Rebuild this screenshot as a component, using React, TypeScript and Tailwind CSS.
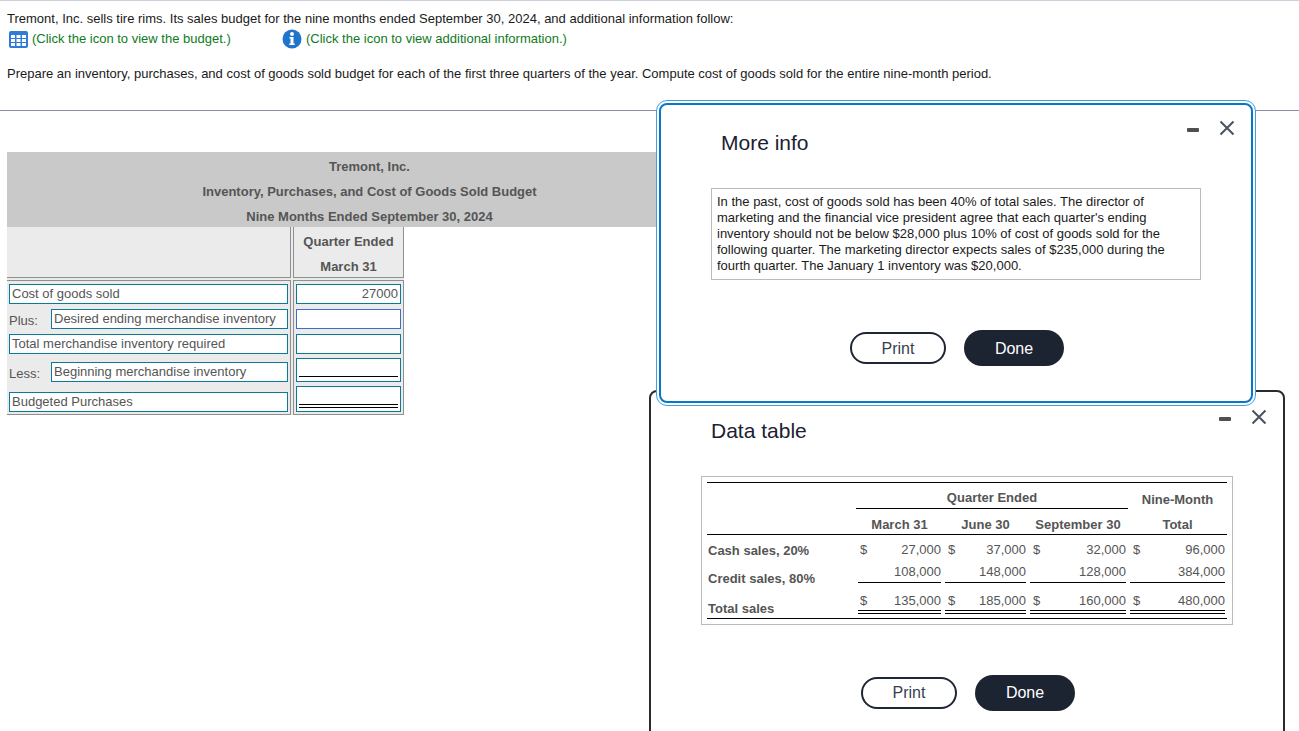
const cols = ["w-[83px]", "w-[81px]", "w-[96px]", "w-[95px]"];

const rows = {
  cash: [
    ["$", "27,000"],
    ["$", "37,000"],
    ["$", "32,000"],
    ["$", "96,000"],
  ],
  credit: ["108,000", "148,000", "128,000", "384,000"],
  total: [
    ["$", "135,000"],
    ["$", "185,000"],
    ["$", "160,000"],
    ["$", "480,000"],
  ],
};

const GridIcon = () => (
  <svg width="19" height="17" viewBox="0 0 19 17" className="shrink-0">
    <rect width="19" height="17" rx="2" fill="#2f7bd5" />
    <g fill="#ffffff">
      <rect x="2" y="4" width="4" height="3" />
      <rect x="7.5" y="4" width="4" height="3" />
      <rect x="13" y="4" width="4" height="3" />
      <rect x="2" y="8" width="4" height="3" />
      <rect x="7.5" y="8" width="4" height="3" />
      <rect x="13" y="8" width="4" height="3" />
      <rect x="2" y="12" width="4" height="3" />
      <rect x="7.5" y="12" width="4" height="3" />
      <rect x="13" y="12" width="4" height="3" />
    </g>
  </svg>
);

const InfoIcon = () => (
  <svg width="20" height="20" viewBox="0 0 20 20" className="shrink-0">
    <circle cx="10" cy="10" r="9.5" fill="#1f74cc" />
    <circle cx="10" cy="5" r="2" fill="#ffffff" />
    <path d="M7.500 8h4v6.500h1.200V16H7.300v-1.500h1.200V9.500h-1z" fill="#ffffff" />
  </svg>
);

const WindowControls = () => (
  <div className="flex items-start gap-[20px]">
    <div className="mt-[8px] h-[4px] w-[12px] rounded-[1px] bg-[#505050]" />
    <svg width="16" height="16" viewBox="0 0 16 16" className="shrink-0">
      <path d="M1.500 1.500l13 13M14.500 1.500l-13 13" stroke="#4a5260" strokeWidth="2" fill="none" />
    </svg>
  </div>
);

const Buttons = ({ labelClass = "" }: { labelClass?: string }) => (
  <div className="flex items-center justify-center gap-[18px] text-[16px]">
    <button className={`h-[32px] w-[96px] rounded-full border-2 border-[#1f2737] bg-white text-[#374151] ${labelClass}`}>Print</button>
    <button className={`h-[36px] w-[100px] rounded-full bg-[#1c2331] text-white ${labelClass}`}>Done</button>
  </div>
);

const Field = ({ text, className }: { text: string; className: string }) => (
  <div className={`flex h-[20px] items-center whitespace-nowrap border border-[#0a7a96] bg-white pl-[2px] text-[#555555] ${className}`}>
    {text}
  </div>
);

const MoneyCell = ({ sign, value, first }: { sign: string; value: string; first: boolean }) => (
  <div className={first ? "flex justify-between pl-[2px]" : "flex justify-between pl-[3px]"}>
    <span>{sign}</span>
    <span>{value}</span>
  </div>
);

const App = () => {
  return (
    <div className="relative h-[731px] w-[1299px] overflow-hidden bg-white text-[13px] leading-[16px] text-[#1a1a1a] [font-family:'Liberation_Sans',sans-serif]">
      {/* Question text */}
      <div className="border-t border-[#ccd0dc] pl-[7px] pt-[10px]">
        <p className="whitespace-nowrap">Tremont, Inc. sells tire rims. Its sales budget for the nine months ended September 30, 2024, and additional information follow:</p>
        <div className="mt-[2px] flex h-[20px] items-center text-[#107a22]">
          <div className="ml-[2px] flex w-[273px] items-center gap-[4px]">
            <GridIcon />
            <span>(Click the icon to view the budget.)</span>
          </div>
          <div className="flex items-center gap-[4px]">
            <InfoIcon />
            <span>(Click the icon to view additional information.)</span>
          </div>
        </div>
        <p className="mt-[17px] whitespace-nowrap">Prepare an inventory, purchases, and cost of goods sold budget for each of the first three quarters of the year. Compute cost of goods sold for the entire nine-month period.</p>
      </div>
      <div className="mt-[28px] border-t border-[#8a90a5]" />

      {/* Budget worksheet */}
      <div className="ml-[7px] mt-[41px] w-[725px]">
        <div className="h-[75px] bg-[#c9c9c9] pt-[2px] text-center font-bold leading-[25px] text-[#555555]">
          <div>Tremont, Inc.</div>
          <div>Inventory, Purchases, and Cost of Goods Sold Budget</div>
          <div>Nine Months Ended September 30, 2024</div>
        </div>
        <div className="grid w-[397px] grid-cols-[284px_111px] gap-x-[2px] gap-y-[2px] bg-[#ebebeb]">
          <div className="h-[51px] border-b border-r border-[#8f8f8f]" />
          <div className="h-[51px] border-b border-l border-r border-[#8f8f8f] text-center font-bold leading-[25px] text-[#555555]">
            <div className="pt-[2px]">Quarter Ended</div>
            <div>March 31</div>
          </div>

          <div className="flex h-[135px] flex-col border-b border-r border-t border-[#8f8f8f] pl-[2px] pt-[3px]">
            <Field text="Cost of goods sold" className="w-[279px]" />
            <div className="mt-[5px] flex h-[20px] items-center text-[#555555]">
              <span className="w-[42px] pt-[3px]">Plus:</span>
              <Field text="Desired ending merchandise inventory" className="w-[237px]" />
            </div>
            <Field text="Total merchandise inventory required" className="mt-[5px] w-[279px]" />
            <div className="mt-[8px] flex h-[20px] items-center text-[#555555]">
              <span className="w-[42px] pt-[3px]">Less:</span>
              <Field text="Beginning merchandise inventory" className="w-[237px]" />
            </div>
            <Field text="Budgeted Purchases" className="mt-[10px] w-[279px]" />
          </div>
          <div className="flex h-[135px] flex-col border border-[#8f8f8f] pl-[2px] pt-[3px]">
            <div className="flex h-[20px] w-[105px] items-center justify-end border border-[#0a7a96] bg-white pr-[2px] text-[#555555]">27000</div>
            <div className="mt-[5px] h-[20px] w-[105px] border border-[#3a6fd0] bg-white" />
            <div className="mt-[5px] h-[20px] w-[105px] border border-[#0a7a96] bg-white" />
            <div className="mt-[4px] h-[24px] w-[105px] border border-[#0a7a96] bg-white px-[2px]">
              <div className="h-[18px] border-b border-black" />
            </div>
            <div className="mt-[4px] h-[26px] w-[105px] border border-[#0a7a96] bg-white px-[2px]">
              <div className="h-[18px] border-b border-black" />
              <div className="h-[3px] border-b border-black" />
            </div>
          </div>
        </div>
      </div>

      {/* Data table window */}
      <div className="absolute left-[649px] top-[390px] h-[400px] w-[636px] rounded-lg border-2 border-[#2b2b2b] bg-white">
        <div className="flex h-[84px] items-start justify-between">
          <h2 className="ml-[60px] mt-[27px] text-[21px] leading-[24px] text-[#1b2130]">Data table</h2>
          <div className="mr-[16px] mt-[17px]">
            <WindowControls />
          </div>
        </div>
        <div className="ml-[50px] h-[149px] w-[532px] border border-[#bbbbbb] px-[5px] pt-[5px] text-[#555555]">
          <div className="border-b border-t border-black">
            <div className="flex h-[26px] font-bold">
              <div className="w-[149px]" />
              <div className="w-[272px] border-b border-black pt-[7px] text-center">Quarter Ended</div>
              <div className="flex-1 pt-[9px] text-center">Nine-Month</div>
            </div>
            <div className="flex h-[25px] gap-x-[4px] pt-[8px] text-center font-bold">
              <div className="-mr-[4px] w-[151px]" />
              <div className={cols[0]}>March 31</div>
              <div className={cols[1]}>June 30</div>
              <div className={cols[2]}>September 30</div>
              <div className={cols[3]}>Total</div>
            </div>
          </div>

          <div className="flex h-[25px] gap-x-[4px]">
            <div className="-mr-[4px] w-[151px] pl-[1px] pt-[8px] font-bold">Cash sales, 20%</div>
            {rows.cash.map(([sign, value], i) => (
              <div key={value} className={`${cols[i]} pt-[7px]`}>
                <MoneyCell sign={sign} value={value} first={i === 0} />
              </div>
            ))}
          </div>
          <div className="flex h-[23px] gap-x-[4px]">
            <div className="-mr-[4px] w-[151px] whitespace-nowrap pl-[1px] pt-[11px] font-bold">Credit sales, 80%</div>
            {rows.credit.map((value, i) => (
              <div key={value} className={`${cols[i]} border-b border-black pt-[4px] text-right`}>
                {value}
              </div>
            ))}
          </div>
          <div className="flex h-[36px] gap-x-[4px] border-b border-black">
            <div className="-mr-[4px] w-[151px] pl-[1px] pt-[18px] font-bold">Total sales</div>
            {rows.total.map(([sign, value], i) => (
              <div key={value} className={cols[i]}>
                <div className="h-[28px] border-b border-black pt-[10px]">
                  <MoneyCell sign={sign} value={value} first={i === 0} />
                </div>
                <div className="h-[3px] border-b border-black" />
              </div>
            ))}
          </div>
        </div>
        <div className="ml-[2px] mt-[50px]">
          <Buttons />
        </div>
      </div>

      {/* More info window */}
      <div className="absolute left-[656px] top-[100px] h-[306px] w-[600px] rounded-[11px] border border-[#3ea0dd] bg-white p-[2px]">
        <div className="h-full rounded-lg border-2 border-[#0a78c8]">
          <div className="flex h-[83px] items-start justify-between">
            <h2 className="ml-[60px] mt-[26px] text-[21px] leading-[24px] text-[#1b2130]">More info</h2>
            <div className="mr-[16px] mt-[15px]">
              <WindowControls />
            </div>
          </div>
          <div className="ml-[50px] h-[92px] w-[490px] border border-[#bbbbbb] px-[5px] pt-[5px]">
            In the past, cost of goods sold has been 40% of total sales. The director of<br />
            marketing and the financial vice president agree that each quarter's ending<br />
            inventory should not be below $28,000 plus 10% of cost of goods sold for the<br />
            following quarter. The marketing director expects sales of $235,000 during the<br />
            fourth quarter. The January 1 inventory was $20,000.
          </div>
          <div className="ml-[2px] mt-[50px]">
            <Buttons labelClass="pt-[1px]" />
          </div>
        </div>
      </div>
    </div>
  );
};

export default App;
